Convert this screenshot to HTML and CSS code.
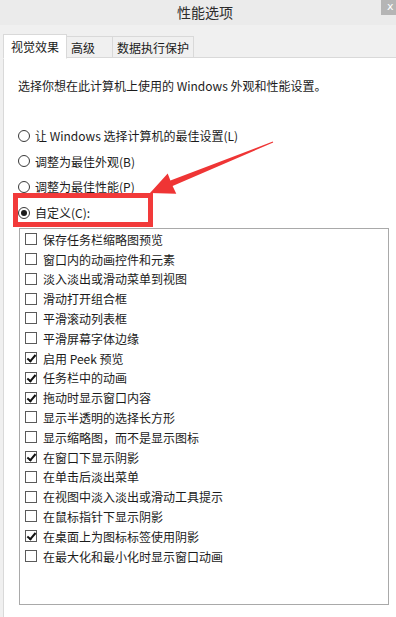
FILE: index.html
```html
<!DOCTYPE html>
<html lang="zh-CN">
<head>
<meta charset="utf-8">
<title>性能选项</title>
<link rel="stylesheet" href="styles.css">
</head>
<body>
<div class="window">
  <div class="titlebar">
    <span class="title">性能选项</span>
    <span class="close">x</span>
  </div>
  <div class="tabstrip">
    <div class="tab active">视觉效果</div>
    <div class="tab">高级</div>
    <div class="tab">数据执行保护</div>
    <div class="tab-fill"></div>
  </div>
  <div class="panel">
    <p class="intro">选择你想在此计算机上使用的 Windows 外观和性能设置。</p>
    <div class="radios">
      <div class="radio-row"><span class="radio"></span><span>让 Windows 选择计算机的最佳设置(L)</span></div>
      <div class="radio-row"><span class="radio"></span><span>调整为最佳外观(B)</span></div>
      <div class="radio-row"><span class="radio"></span><span>调整为最佳性能(P)</span></div>
      <div class="radio-row"><span class="radio on"></span><span>自定义(C):</span></div>
    </div>
    <div class="listbox">
      <div class="item"><span class="cb"></span><span>保存任务栏缩略图预览</span></div>
      <div class="item"><span class="cb"></span><span>窗口内的动画控件和元素</span></div>
      <div class="item"><span class="cb"></span><span>淡入淡出或滑动菜单到视图</span></div>
      <div class="item"><span class="cb"></span><span>滑动打开组合框</span></div>
      <div class="item"><span class="cb"></span><span>平滑滚动列表框</span></div>
      <div class="item"><span class="cb"></span><span>平滑屏幕字体边缘</span></div>
      <div class="item"><span class="cb on"></span><span>启用 Peek 预览</span></div>
      <div class="item"><span class="cb on"></span><span>任务栏中的动画</span></div>
      <div class="item"><span class="cb on"></span><span>拖动时显示窗口内容</span></div>
      <div class="item"><span class="cb"></span><span>显示半透明的选择长方形</span></div>
      <div class="item"><span class="cb"></span><span>显示缩略图，而不是显示图标</span></div>
      <div class="item"><span class="cb on"></span><span>在窗口下显示阴影</span></div>
      <div class="item"><span class="cb"></span><span>在单击后淡出菜单</span></div>
      <div class="item"><span class="cb"></span><span>在视图中淡入淡出或滑动工具提示</span></div>
      <div class="item"><span class="cb"></span><span>在鼠标指针下显示阴影</span></div>
      <div class="item"><span class="cb on"></span><span>在桌面上为图标标签使用阴影</span></div>
      <div class="item"><span class="cb"></span><span>在最大化和最小化时显示窗口动画</span></div>
    </div>
  </div>
  <div class="highlight"></div>
  <svg class="arrow" width="396" height="617" viewBox="0 0 396 617">
    <polygon points="273.2,142.5 172.6,186.0 176.3,193.7 150,193 167.7,173.5 170.4,180.6 272.8,141.5" fill="#ef3535"/>
  </svg>
</div>
</body>
</html>
```
FILE: styles.css
```css
* { box-sizing: border-box; }
html, body {
  margin: 0;
  padding: 0;
  width: 396px;
  height: 617px;
  overflow: hidden;
  background: #f0f0f0;
}
.window {
  position: relative;
  width: 396px;
  height: 617px;
  display: flex;
  flex-direction: column;
  font-family: "Noto Sans CJK SC", "Noto Sans", sans-serif;
  font-size: 12px;
  color: #1b1b1b;
  background: #f0f0f0;
}
.titlebar {
  position: relative;
  height: 25px;
  flex: none;
  display: flex;
  justify-content: center;
  align-items: center;
  background: #ebebeb;
}
.title {
  font-size: 14px;
  color: #2b2b2b;
  margin-left: 14px;
  margin-top: -1px;
}
.close {
  position: absolute;
  top: 0;
  right: 0;
  width: 15px;
  height: 15px;
  background: #b5b5b5;
  color: #fff;
  font-family: "DejaVu Sans", sans-serif;
  font-size: 11px;
  line-height: 13px;
  padding-left: 6px;
  overflow: hidden;
}
.tabstrip {
  flex: none;
  display: flex;
  align-items: flex-end;
  height: 33px;
  padding-left: 3px;
  padding-top: 8px;
}
.tab {
  height: 22px;
  border: 1px solid #d9d9d9;
  border-bottom: 1px solid #d9d9d9;
  background: #f0f0f0;
  padding: 0 4px;
  display: flex;
  align-items: center;
  color: #1b1b1b;
  margin-left: -1px;
}
.tab.active {
  height: 25px;
  background: #fff;
  border-bottom-color: #fff;
  padding: 0 7px;
  margin-left: 0;
  margin-bottom: -1px;
  position: relative;
  z-index: 1;
}
.tab:nth-child(2) { width: 47px; }
.tab:nth-child(3) { width: 82px; }
.tab-fill {
  flex: 1;
  border-bottom: 1px solid #d9d9d9;
}
.panel {
  flex: 1;
  margin-left: 3px;
  background: #fff;
  border-left: 1px solid #d9d9d9;
  padding-top: 20px;
}
.intro {
  margin: 0 0 0 14px;
  line-height: 16px;
}
.radios {
  margin-top: 29px;
  padding-left: 14px;
}
.radio-row {
  display: flex;
  align-items: center;
  height: 25.6px;
}
.radio {
  width: 12px;
  height: 12px;
  border: 1px solid #3a3a3a;
  border-radius: 50%;
  margin-right: 5px;
  display: flex;
  align-items: center;
  justify-content: center;
  background: #fff;
}
.radio.on::after {
  content: "";
  width: 6px;
  height: 6px;
  border-radius: 50%;
  background: #1b1b1b;
}
.listbox {
  margin: 3px 7px 0 15px;
  height: 377px;
  border: 1px solid #a9a9a9;
  background: #fff;
  padding-left: 5px;
}
.item {
  display: flex;
  align-items: center;
  height: 19.8px;
}
.cb {
  width: 12px;
  height: 12px;
  border: 1px solid #5a5a5a;
  margin-right: 6px;
  background: #fff;
  position: relative;
}
.cb.on::after {
  content: "";
  position: absolute;
  left: 3px;
  top: 0px;
  width: 3px;
  height: 7px;
  border-right: 2px solid #111;
  border-bottom: 2px solid #111;
  transform: rotate(40deg);
}
.highlight {
  position: absolute;
  left: 13px;
  top: 193px;
  width: 140px;
  height: 34px;
  border: 5px solid #f23a3a;
}
.arrow {
  position: absolute;
  left: 0;
  top: 0;
  pointer-events: none;
}
```
